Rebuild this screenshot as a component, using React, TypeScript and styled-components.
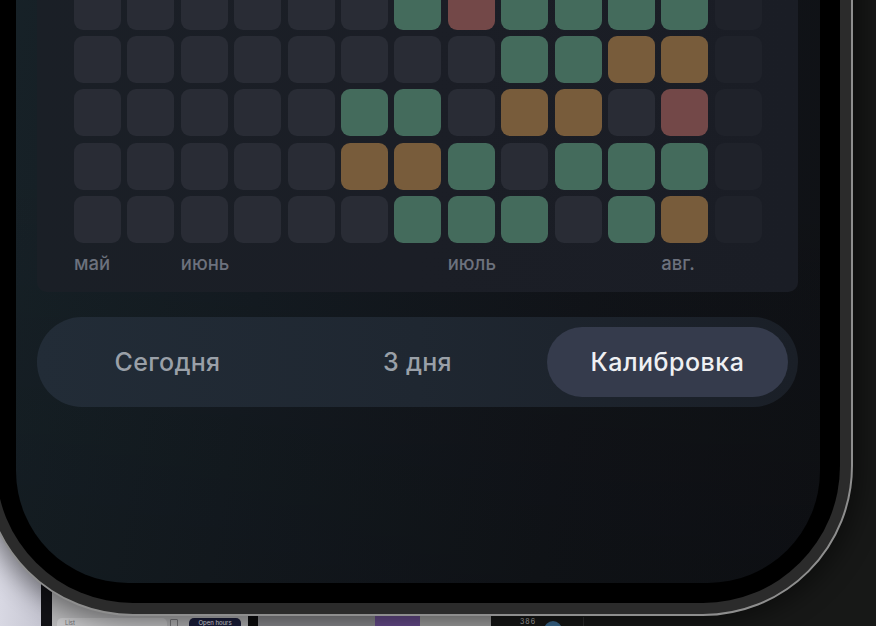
import React from 'react'
import styled, { createGlobalStyle } from 'styled-components'

const GlobalStyle = createGlobalStyle`
  html, body {
    margin: 0;
    padding: 0;
    background: #1a1b1a;
  }
  body {
    font-family: Inter, 'Noto Sans', 'DejaVu Sans', sans-serif;
  }
`

// desktop behind the phone
const Page = styled.div`
  position: relative;
  width: 876px;
  height: 626px;
  overflow: hidden;
  display: flex;
`

const Pane = styled.div<{ $w?: number; $bg: string }>`
  width: ${(p) => (p.$w ? `${p.$w}px` : 'auto')};
  flex: ${(p) => (p.$w ? '0 0 auto' : '1 1 auto')};
  background: ${(p) => p.$bg};
  display: flex;
  flex-direction: column;
  justify-content: flex-end;
`

const Strip = styled.div`
  height: 9px;
  overflow: hidden;
  display: flex;
  align-items: flex-start;
`

const ListCard = styled.div`
  margin-left: 5px;
  margin-top: 1px;
  width: 110px;
  height: 20px;
  border-radius: 5px 5px 0 0;
  background: #c9c9cb;
  padding: 1px 0 0 8px;
  font-size: 6px;
  line-height: 7px;
  color: #6f6f73;
  box-sizing: border-box;
`

const TinyBox = styled.div`
  margin-left: 3px;
  margin-top: 2px;
  width: 6px;
  height: 10px;
  border: 1px solid #7a7a7e;
  border-radius: 1px;
`

const NavyPill = styled.div`
  margin-left: 11px;
  margin-top: 1px;
  width: 52px;
  height: 20px;
  box-sizing: border-box;
  padding-top: 1px;
  border-radius: 5px 5px 0 0;
  background: #1c1f3d;
  color: #e8e8f0;
  font-size: 6px;
  line-height: 7px;
  text-align: center;
  white-space: nowrap;
  overflow: hidden;
`

const DimDigits = styled.div`
  margin-left: 29px;
  margin-top: 1px;
  color: #b7b7b7;
  font-size: 7px;
  line-height: 8px;
  letter-spacing: 1px;
`

const BlueDot = styled.div`
  margin-left: 8px;
  margin-top: 4px;
  width: 18px;
  height: 18px;
  border-radius: 50%;
  background: #3c6c93;
`

const Rule = styled.div`
  margin-left: 21px;
  width: 1px;
  height: 9px;
  background: #2e2f2e;
`

// the phone lies over the desktop
const Frame = styled.div`
  position: absolute;
  left: -17px;
  bottom: 10px;
  width: 870px;
  box-sizing: border-box;
  padding: 11px;
  border: 2px solid #8e8e8e;
  border-radius: 150px;
  background: #2b2b2b;
  box-shadow: 0 0 26px 8px rgba(0, 0, 0, 0.45);
`

const Bezel = styled.div`
  padding: 20px;
  border-radius: 137px;
  background: #000;
`

const Screen = styled.div`
  border-radius: 112px;
  overflow: hidden;
  padding: 60px 22px 176px 21px;
  display: flex;
  flex-direction: column;
  gap: 25px;
  background:
    linear-gradient(180deg, rgba(0, 0, 0, 0) 45%, rgba(0, 0, 0, 0.12) 100%),
    linear-gradient(100deg, #172228 0%, #141b21 35%, #111419 70%, #0f1115 100%);
`

const Card = styled.div`
  background: linear-gradient(90deg, #1a1f26 0%, #1b1e26 50%, #1a1d25 100%);
  border-radius: 10px;
  padding: 36px 36px 18px 37px;
`

const Grid = styled.div`
  display: grid;
  grid-template-columns: repeat(13, 47px);
  grid-auto-rows: 47px;
  column-gap: 6.4px;
  row-gap: 6.3px;
`

const cellColors: Record<string, string> = {
  e: '#292c35',
  g: '#446b5c',
  o: '#785c3b',
  r: '#734848',
  f: '#1f222a',
}

const Cell = styled.div<{ $kind: string }>`
  border-radius: 9px;
  background: ${(p) => cellColors[p.$kind]};
`

const Months = styled.div`
  display: grid;
  grid-template-columns: repeat(13, 47px);
  column-gap: 6.4px;
  margin-top: 9px;
  height: 22px;
`

const Month = styled.span<{ $col: number }>`
  grid-row: 1;
  grid-column: ${(p) => p.$col} / span 2;
  font-size: 18.5px;
  line-height: 22px;
  font-weight: 500;
  color: #6c717d;
  white-space: nowrap;
`

const Segmented = styled.div`
  height: 90px;
  box-sizing: border-box;
  padding: 10px;
  border-radius: 45px;
  background: linear-gradient(90deg, #222c37 0%, #1f2731 50%, #1a1f27 100%);
  display: grid;
  grid-template-columns: repeat(3, 1fr);
  column-gap: 9px;
`

const Segment = styled.div<{ $active?: boolean }>`
  border-radius: 35px;
  display: flex;
  align-items: center;
  justify-content: center;
  font-size: 25px;
  letter-spacing: ${(p) => (p.$active ? '0.5px' : '0.3px')};
  font-weight: 500;
  color: ${(p) => (p.$active ? '#eff0f3' : '#9aa0a8')};
  background: ${(p) => (p.$active ? '#353b4c' : 'transparent')};
`

const rows = [
  'eeeeeggeggogf',
  'eeeeeegegggef',
  'eeeeeegrggggf',
  'eeeeeeeeggoof',
  'eeeeeggeooerf',
  'eeeeeoogegggf',
  'eeeeeegggegof',
]

const months = [
  { label: 'май', col: 1 },
  { label: 'июнь', col: 3 },
  { label: 'июль', col: 8 },
  { label: 'авг.', col: 12 },
]

const tabs = ['Сегодня', '3 дня', 'Калибровка']

export default function App() {
  return (
    <>
      <GlobalStyle />
      <Page>
        <Pane $w={41} $bg="linear-gradient(90deg, #d8d8e3 0%, #c6c6d2 100%)" />
        <Pane $w={11} $bg="#111116" />
        <Pane $w={196} $bg="#b8b8ba">
          <Strip>
            <ListCard>List</ListCard>
            <TinyBox />
            <NavyPill>Open hours</NavyPill>
          </Strip>
        </Pane>
        <Pane $w={10} $bg="#0d0d0f" />
        <Pane $w={117} $bg="#8e8e92" />
        <Pane $w={45} $bg="#6b4f91" />
        <Pane $w={71} $bg="#a4a4a4" />
        <Pane $bg="#171817">
          <Strip>
            <DimDigits>386</DimDigits>
            <BlueDot />
            <Rule />
          </Strip>
        </Pane>

        <Frame>
          <Bezel>
            <Screen>
              <Card>
                <Grid>
                  {rows.map((row, r) =>
                    row.split('').map((k, c) => <Cell key={`${r}-${c}`} $kind={k} />)
                  )}
                </Grid>
                <Months>
                  {months.map((m) => (
                    <Month key={m.label} $col={m.col}>
                      {m.label}
                    </Month>
                  ))}
                </Months>
              </Card>
              <Segmented>
                {tabs.map((t, i) => (
                  <Segment key={t} $active={i === 2}>
                    {t}
                  </Segment>
                ))}
              </Segmented>
            </Screen>
          </Bezel>
        </Frame>
      </Page>
    </>
  )
}
